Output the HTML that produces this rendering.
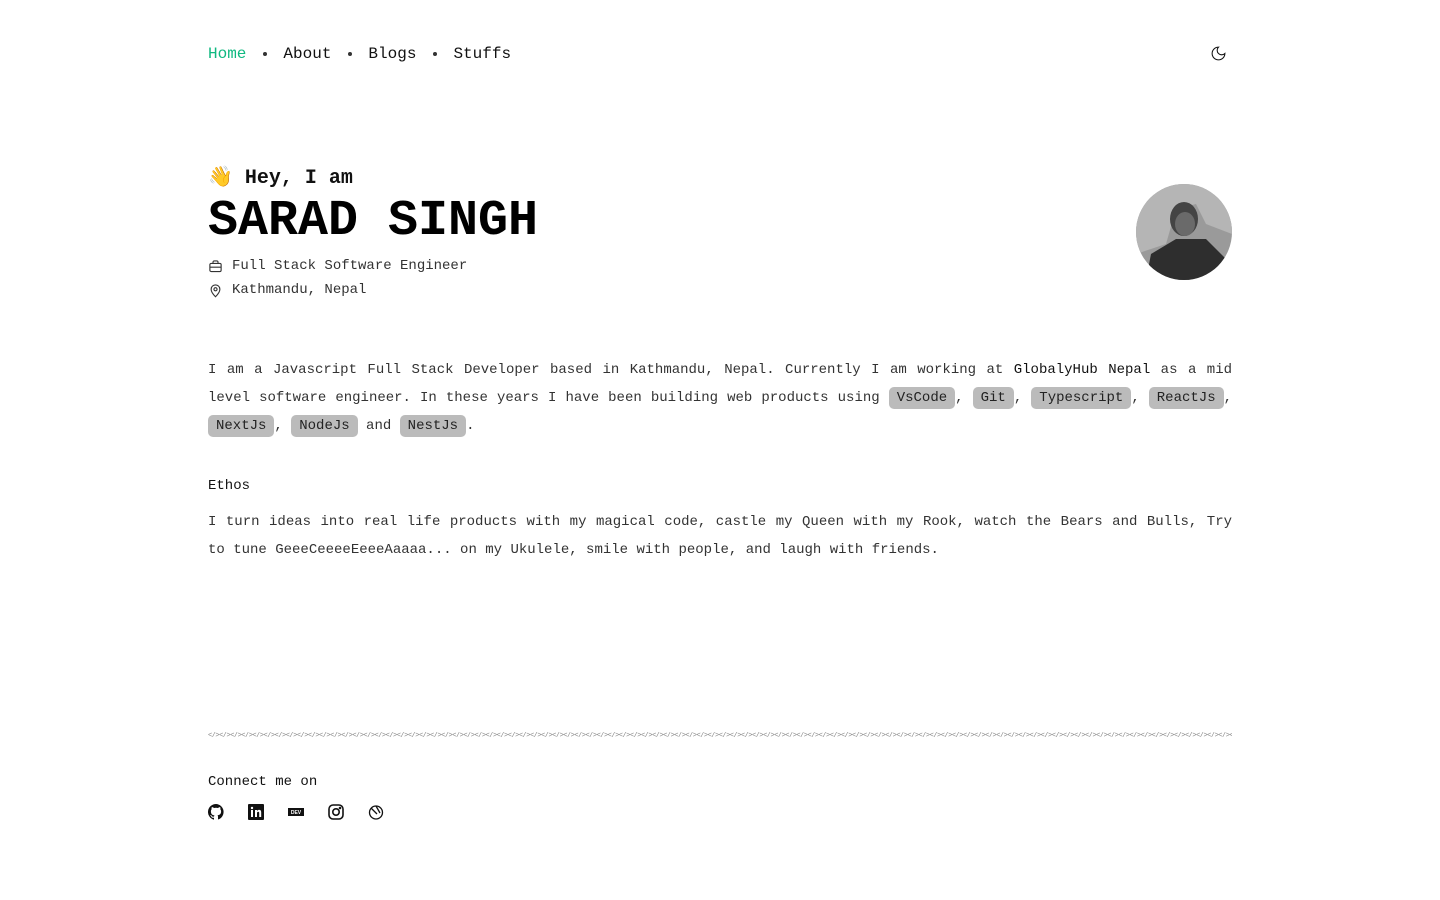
<!DOCTYPE html>
<html><head><meta charset="utf-8"><style>
*{margin:0;padding:0;box-sizing:border-box}
body{width:1440px;height:900px;background:#fff;font-family:"Liberation Mono",monospace;color:#333;position:relative;overflow:hidden}
.nav{position:absolute;left:208px;top:45px;font-size:16px;color:#111;display:flex;align-items:center}
.nav span.dot{display:inline-block;width:4px;height:4px;border-radius:50%;background:#333;margin:0 16px 0 17px}
.nav .a{color:#10b981}
.moon{position:absolute;left:1210px;top:45px}
.hey{position:absolute;left:208px;top:164px;font-size:20px;font-weight:bold;color:#111}
.name{position:absolute;left:208px;top:194px;font-size:50px;font-weight:bold;color:#000;line-height:56px}
.info{position:absolute;left:208px;font-size:14px;color:#333;display:flex;align-items:center}
.info svg{margin-right:9px}
.av{position:absolute;left:1136px;top:184px;width:96px;height:96px;border-radius:50%;overflow:hidden}
p.t{position:absolute;left:208px;width:1024px;font-size:14px;line-height:28px;text-align:justify;color:#333}
b.n{font-weight:normal;color:#111}
.tag{background:#bbb;border-radius:5px;padding:3px 8px;color:#222}
.div{position:absolute;left:208px;top:732px;width:1024px;height:10px;overflow:hidden;white-space:nowrap;font-size:7px;color:#888;letter-spacing:-0.5px}
.soc{position:absolute;left:208px;top:804px;display:flex;gap:24px}
</style></head><body>
<div class="nav"><span class="a">Home</span><span class="dot"></span><span>About</span><span class="dot"></span><span>Blogs</span><span class="dot"></span><span>Stuffs</span></div>
<svg class="moon" width="17" height="17" viewBox="0 0 24 24" fill="none" stroke="#111" stroke-width="1.5"><path d="M12 3a6 6 0 0 0 9 9 9 9 0 1 1-9-9z"/></svg>
<div class="hey">👋 Hey, I am</div>
<div class="name">SARAD SINGH</div>
<div class="info" style="top:258px"><svg width="15" height="15" viewBox="0 0 24 24" fill="none" stroke="#333" stroke-width="1.8"><rect x="3" y="7" width="18" height="13" rx="2"/><path d="M8 7V5a2 2 0 0 1 2-2h4a2 2 0 0 1 2 2v2M3 13h18"/></svg>Full Stack Software Engineer</div>
<div class="info" style="top:282px"><svg width="15" height="15" viewBox="0 0 24 24" fill="none" stroke="#333" stroke-width="1.8"><path d="M12 22s-7-7-7-12a7 7 0 0 1 14 0c0 5-7 12-7 12z"/><circle cx="12" cy="10" r="2.5"/></svg>Kathmandu, Nepal</div>
<div class="av"><svg width="96" height="96"><rect width="96" height="96" fill="#9a9a9a"/><path d="M0 0h96v50L70 40 60 20 40 25 30 60 0 70z" fill="#b5b5b5"/><ellipse cx="48" cy="35" rx="14" ry="17" fill="#444"/><ellipse cx="49" cy="40" rx="10" ry="12" fill="#6a6a6a"/><path d="M10 96 15 70 40 55 70 55 90 75 96 96z" fill="#2e2e2e"/></svg></div>
<p class="t" style="top:356px">I am a Javascript Full Stack Developer based in Kathmandu, Nepal. Currently I am working at <b class="n">GlobalyHub Nepal</b> as a mid level software engineer. In these years I have been building web products using <span class="tag">VsCode</span>, <span class="tag">Git</span>, <span class="tag">Typescript</span>, <span class="tag">ReactJs</span>, <span class="tag">NextJs</span>, <span class="tag">NodeJs</span> and <span class="tag">NestJs</span>.</p>
<p class="t" style="top:472px;color:#111">Ethos</p>
<p class="t" style="top:508px">I turn ideas into real life products with my magical code, castle my Queen with my Rook, watch the Bears and Bulls, Try to tune GeeeCeeeeEeeeAaaaa... on my Ukulele, smile with people, and laugh with friends.</p>
<div class="div">&lt;/&gt;&lt;/&gt;&lt;/&gt;&lt;/&gt;&lt;/&gt;&lt;/&gt;&lt;/&gt;&lt;/&gt;&lt;/&gt;&lt;/&gt;&lt;/&gt;&lt;/&gt;&lt;/&gt;&lt;/&gt;&lt;/&gt;&lt;/&gt;&lt;/&gt;&lt;/&gt;&lt;/&gt;&lt;/&gt;&lt;/&gt;&lt;/&gt;&lt;/&gt;&lt;/&gt;&lt;/&gt;&lt;/&gt;&lt;/&gt;&lt;/&gt;&lt;/&gt;&lt;/&gt;&lt;/&gt;&lt;/&gt;&lt;/&gt;&lt;/&gt;&lt;/&gt;&lt;/&gt;&lt;/&gt;&lt;/&gt;&lt;/&gt;&lt;/&gt;&lt;/&gt;&lt;/&gt;&lt;/&gt;&lt;/&gt;&lt;/&gt;&lt;/&gt;&lt;/&gt;&lt;/&gt;&lt;/&gt;&lt;/&gt;&lt;/&gt;&lt;/&gt;&lt;/&gt;&lt;/&gt;&lt;/&gt;&lt;/&gt;&lt;/&gt;&lt;/&gt;&lt;/&gt;&lt;/&gt;&lt;/&gt;&lt;/&gt;&lt;/&gt;&lt;/&gt;&lt;/&gt;&lt;/&gt;&lt;/&gt;&lt;/&gt;&lt;/&gt;&lt;/&gt;&lt;/&gt;&lt;/&gt;&lt;/&gt;&lt;/&gt;&lt;/&gt;&lt;/&gt;&lt;/&gt;&lt;/&gt;&lt;/&gt;&lt;/&gt;&lt;/&gt;&lt;/&gt;&lt;/&gt;&lt;/&gt;&lt;/&gt;&lt;/&gt;&lt;/&gt;&lt;/&gt;&lt;/&gt;&lt;/&gt;&lt;/&gt;&lt;/&gt;&lt;/&gt;&lt;/&gt;&lt;/&gt;&lt;/&gt;&lt;/&gt;&lt;/&gt;&lt;/&gt;&lt;/&gt;&lt;/&gt;&lt;/&gt;&lt;/&gt;&lt;/&gt;&lt;/&gt;&lt;/&gt;&lt;/&gt;&lt;/&gt;&lt;/&gt;&lt;/&gt;&lt;/&gt;&lt;/&gt;&lt;/&gt;&lt;/&gt;&lt;/&gt;&lt;/&gt;&lt;/&gt;&lt;/&gt;&lt;/&gt;&lt;/&gt;&lt;/&gt;&lt;/&gt;&lt;/&gt;&lt;/&gt;&lt;/&gt;&lt;/&gt;&lt;/&gt;&lt;/&gt;&lt;/&gt;&lt;/&gt;&lt;/&gt;&lt;/&gt;&lt;/&gt;&lt;/&gt;&lt;/&gt;</div>
<p class="t" style="top:768px;color:#111">Connect me on</p>
<div class="soc">
<svg width="16" height="16" viewBox="0 0 16 16"><path fill="#111" d="M8 0a8 8 0 0 0-2.5 15.6c.4 0 .5-.2.5-.4v-1.5c-2.2.5-2.7-1-2.7-1-.4-.9-.9-1.2-.9-1.2-.7-.5.1-.5.1-.5.8.1 1.200.8 1.2.8.7 1.3 1.9.9 2.3.7.1-.5.3-.9.5-1.1-1.8-.2-3.600-.9-3.600-4 0-.9.3-1.600.8-2.100-.1-.2-.4-1 .1-2.100 0 0 .7-.2 2.200.8a7.600 7.600 0 0 1 4 0c1.500-1 2.200-.8 2.200-.8.4 1.100.2 1.900.1 2.100.5.6.8 1.300.8 2.100 0 3.100-1.900 3.700-3.600 3.900.3.3.5.8.5 1.500v2.200c0 .2.1.5.6.4A8 8 0 0 0 8 0z"/></svg>
<svg width="16" height="16" viewBox="0 0 16 16"><rect width="16" height="16" rx="1" fill="#111"/><rect x="3" y="6" width="2" height="7" fill="#fff"/><circle cx="4" cy="4" r="1.2" fill="#fff"/><path d="M7 6h2v1c.5-.8 1.3-1.1 2.2-1.1 1.5 0 2 1 2 2.5V13h-2V9c0-.8-.3-1.3-1-1.3S9 8.3 9 9v4H7z" fill="#fff"/></svg>
<svg width="16" height="16" viewBox="0 0 16 16"><rect y="4" width="16" height="8" fill="#111"/><text x="8" y="10.2" font-size="5" fill="#fff" text-anchor="middle" font-family="Liberation Sans" font-weight="bold">DEV</text></svg>
<svg width="16" height="16" viewBox="0 0 16 16" fill="none" stroke="#111" stroke-width="1.6"><rect x="1" y="1" width="14" height="14" rx="4"/><circle cx="8" cy="8" r="3.2"/><circle cx="12" cy="4" r=".5" fill="#111"/></svg>
<svg width="16" height="16" viewBox="0 0 16 16" fill="none" stroke="#111" stroke-width="1.3"><circle cx="8" cy="8.5" r="6.5"/><path d="M3 4l6 6M8 2l4 7"/></svg>
</div>
</body></html>
